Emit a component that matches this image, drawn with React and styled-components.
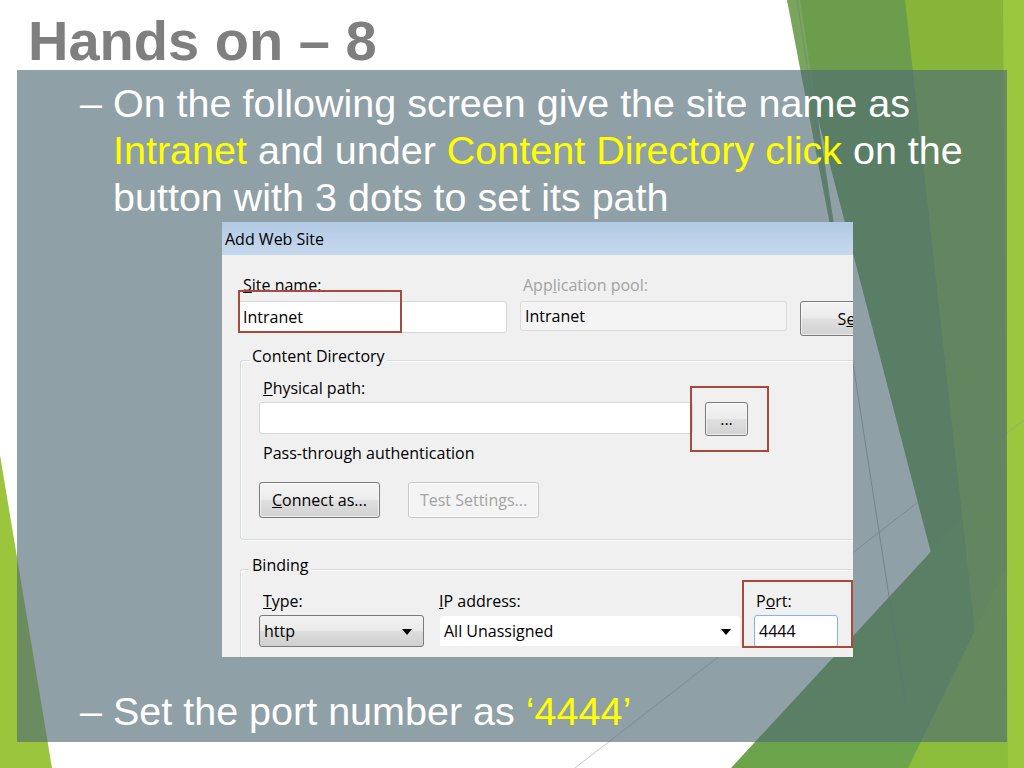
import React from 'react'
import styled, { createGlobalStyle } from 'styled-components'

const GlobalStyle = createGlobalStyle`
  html, body { margin: 0; padding: 0; }
  body { background: #fff; font-family: "Liberation Sans", Arial, sans-serif; }
`

const Slide = styled.div`
  position: relative;
  width: 1024px;
  height: 768px;
  overflow: hidden;
  background: #fff;
`

const Backdrop = styled.svg`
  position: absolute;
  left: 0;
  top: 0;
  width: 1024px;
  height: 768px;
`

const Title = styled.h1`
  position: relative;
  box-sizing: border-box;
  height: 70px;
  margin: 0;
  padding: 13px 0 0 28px;
  font: bold 56px/56px "Liberation Sans", Arial, sans-serif;
  color: #7f7f7f;
`

const Panel = styled.section`
  position: relative;
  box-sizing: border-box;
  width: 990px;
  height: 672px;
  margin-left: 17px;
  padding-top: 10px;
  background: rgba(80, 107, 116, 0.64);
`

const Bullet = styled.p`
  margin: ${({ $top }) => $top || 0}px 0 0;
  padding-left: 96px;
  text-indent: -33px;
  font: 39.5px/47px "Liberation Sans", Arial, sans-serif;
  color: #fff;
`

const Hi = styled.span`
  color: #ffff00;
`

/* ---------- the screenshot of the IIS dialog ---------- */

const Dialog = styled.div`
  position: relative;
  width: 631px;
  height: 435px;
  margin: 1px 0 0 205px;
  overflow: hidden;
  background: #f0f0f0;
  font: 16px/18px "Open Sans", "Noto Sans", sans-serif;
  color: #000;
`

const TitleBar = styled.div`
  height: 33px;
  padding-left: 3px;
  display: flex;
  align-items: center;
  background: linear-gradient(#b2c9e4, #c6d8ed);
`

const Body = styled.div`
  padding: 21px 0 0 16px;
`

const TopRow = styled.div`
  display: flex;
  align-items: flex-start;
  gap: 13px;
`

const Field = styled.div`
  flex: none;
  display: flex;
  flex-direction: column;
  gap: 7px;
  width: ${({ $w }) => $w}px;
`

const Label = styled.div`
  height: 18px;
  margin-top: ${({ $top }) => $top || 0}px;
  padding-left: ${({ $pad }) => ($pad === undefined ? 5 : $pad)}px;
  white-space: nowrap;
  color: ${({ $off }) => ($off ? '#a3a3a3' : '#000')};
`

const TextBox = styled.div`
  box-sizing: border-box;
  flex: none;
  height: ${({ $h }) => $h || 32}px;
  width: ${({ $w }) => ($w ? `${$w}px` : 'auto')};
  padding-left: 4px;
  display: flex;
  align-items: center;
  background: ${({ $off }) => ($off ? '#f4f4f4' : '#fff')};
  border: 1px solid ${({ $off, $focus }) => ($focus ? '#86b3e2' : $off ? '#dadada' : '#d3d6da')};
  border-radius: 3px;
`

const PushButton = styled.div`
  box-sizing: border-box;
  flex: none;
  width: ${({ $w }) => $w}px;
  height: ${({ $h }) => $h || 36}px;
  display: flex;
  align-items: center;
  justify-content: center;
  white-space: nowrap;
  border: 1px solid ${({ $off }) => ($off ? '#c3c7ca' : '#7a7a7a')};
  border-radius: 3px;
  color: ${({ $off }) => ($off ? '#a3a3a3' : '#000')};
  background: ${({ $off }) =>
    $off ? '#f4f4f4' : 'linear-gradient(#f4f4f4 0%, #ececec 48%, #dfdfdf 52%, #d2d2d2 100%)'};
  box-shadow: inset 0 0 0 1px rgba(255, 255, 255, 0.6);
`

const Group = styled.div`
  position: relative;
  box-sizing: border-box;
  width: 640px;
  margin: ${({ $top }) => $top}px 0 0 2px;
  padding: 18px 0 21px 18px;
  border: 1px solid #d6dbdf;
  border-right: none;
  border-radius: 3px 0 0 3px;
  box-shadow: inset 1px 1px 0 #fff, 0 1px 0 #fff;
  ${({ $open }) => ($open ? 'border-bottom: none; padding-top: 22px;' : '')}
`

const Legend = styled.span`
  position: absolute;
  top: -14px;
  left: 9px;
  padding: 0 2px;
  background: #f0f0f0;
`

const PathRow = styled.div`
  display: flex;
  align-items: flex-start;
  gap: 12px;
  margin-top: 5px;
`

const ButtonRow = styled.div`
  display: flex;
  gap: 28px;
  margin-top: 20px;
`

const BindRow = styled.div`
  display: grid;
  grid-template-columns: 165px 302px 82px;
  column-gap: 15px;
  row-gap: 5px;
  & > *:nth-child(3n) {
    margin-left: -2px;
  }
`

const Select = styled.div`
  position: relative;
  box-sizing: border-box;
  height: 32px;
  padding-left: 4px;
  display: flex;
  align-items: center;
  border-radius: 3px;
  ${({ $plain }) =>
    $plain
      ? 'background: #fff; border: 1px solid #eef0f2;'
      : 'background: linear-gradient(#f2f2f2 0%, #eaeaea 48%, #dcdcdc 52%, #d0d0d0 100%); border: 1px solid #7a7a7a;'}

  &::after {
    content: '';
    position: absolute;
    right: ${({ $plain }) => ($plain ? 9 : 11)}px;
    top: 13px;
    border-left: 5px solid transparent;
    border-right: 5px solid transparent;
    border-top: 6px solid #000;
  }
`

const Mark = styled.div`
  position: absolute;
  box-sizing: border-box;
  left: ${({ $x }) => $x}px;
  top: ${({ $y }) => $y}px;
  width: ${({ $w }) => $w}px;
  height: ${({ $h }) => $h}px;
  border: 2px solid #a7493b;
`

function WebSiteDialog() {
  return (
    <Dialog>
      <TitleBar>Add Web Site</TitleBar>
      <Body>
        <TopRow>
          <Field $w={269}>
            <Label><u>S</u>ite name:</Label>
            <TextBox>Intranet</TextBox>
          </Field>
          <Field $w={267}>
            <Label $off $pad={3}>App<u>l</u>ication pool:</Label>
            <TextBox $off $h={30}>Intranet</TextBox>
          </Field>
          <Field $w={132}>
            <Label />
            <PushButton $w={132} $h={35}>S<u>e</u>lect...</PushButton>
          </Field>
        </TopRow>

        <Group $top={24}>
          <Legend>Content Directory</Legend>
          <Label $pad={4}><u>P</u>hysical path:</Label>
          <PathRow>
            <TextBox $w={434} />
            <PushButton $w={43} $h={34}>...</PushButton>
          </PathRow>
          <Label $pad={4} $top={8}>Pass-through authentication</Label>
          <ButtonRow>
            <PushButton $w={121}><u>C</u>onnect as...</PushButton>
            <PushButton $w={131} $off>Test Settin<u>g</u>s...</PushButton>
          </ButtonRow>
        </Group>

        <Group $top={29} $open>
          <Legend>Binding</Legend>
          <BindRow>
            <Label $pad={4}><u>T</u>ype:</Label>
            <Label $pad={0}><u>I</u>P address:</Label>
            <Label $pad={2}>P<u>o</u>rt:</Label>
            <Select>http</Select>
            <Select $plain>All Unassigned</Select>
            <TextBox $focus>4444</TextBox>
          </BindRow>
        </Group>
      </Body>

      <Mark $x={16} $y={68} $w={164} $h={43} />
      <Mark $x={468} $y={164} $w={79} $h={66} />
      <Mark $x={520} $y={358} $w={111} $h={68} />
    </Dialog>
  )
}

function Facets() {
  return (
    <Backdrop viewBox="0 0 1024 768">
      <polygon points="0,455 52,768 0,768" fill="#9bc53d" />
      <polygon points="787,0 1024,0 1024,768 987,768" fill="#6c9d4d" />
      <polygon points="787,0 800,0 850,330" fill="#79a65c" />
      <polygon points="731,768 1024,451 1024,768" fill="#6ca44b" />
      <polygon points="905,0 1024,0 1024,768 990,768" fill="#86b53a" />
      <polygon points="908,768 1024,530 1024,768" fill="#8bbd3b" />
      <polygon points="1003,0 1024,0 1024,768 1008,768" fill="#9ac73e" />
      <line x1="797" y1="0" x2="905" y2="700" stroke="#6f8580" strokeWidth="1" opacity="0.6" />
      <line x1="575" y1="768" x2="1024" y2="420" stroke="#8a9a98" strokeWidth="1" opacity="0.5" />
    </Backdrop>
  )
}

export default function App() {
  return (
    <>
      <GlobalStyle />
      <Slide>
        <Facets />
        <Title>Hands on – 8</Title>
        <Panel>
          <Bullet>
            – On the following screen give the site name as <Hi>Intranet</Hi> and under{' '}
            <Hi>Content Directory click</Hi> on the button with 3 dots to set its path
          </Bullet>
          <WebSiteDialog />
          <Bullet $top={31}>
            – Set the port number as <Hi>‘4444’</Hi>
          </Bullet>
        </Panel>
      </Slide>
    </>
  )
}
